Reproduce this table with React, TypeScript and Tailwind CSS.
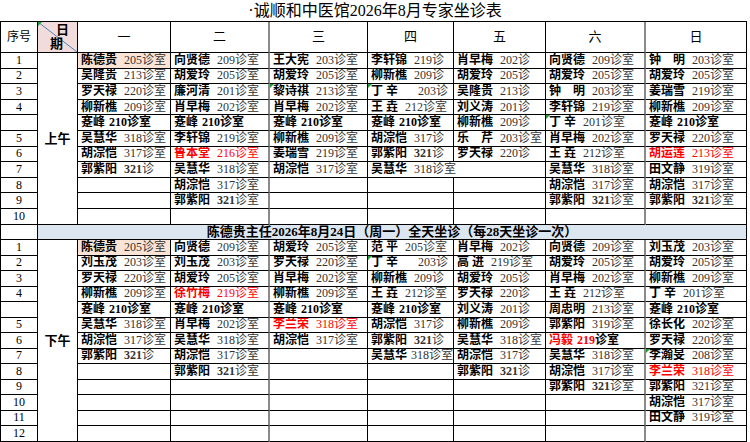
import { Fragment } from 'react'

// flags: r = red, b = bold room number, a = all bold, p = peach bg, w = spills into next column, x = extra gap, n = narrow gap, t = green corner mark
const am: string[][] = [
  ['陈德贵|205诊室|p', '吴隆贵|213诊室', '罗天禄|220诊室', '柳新樵|209诊室', '蹇峰|210诊室|a', '吴慧华|318诊室', '胡淙恺|317诊室', '郭紫阳|321诊|b', '', '', ''],
  ['向贤德|209诊室', '胡爱玲|205诊室', '廉河清|201诊室', '肖早梅|202诊室', '蹇峰|210诊室|a', '李轩锦|219诊室', '鲁本堂|216诊室|r', '吴慧华|318诊室', '胡淙恺|317诊室', '郭紫阳|321诊室|b', ''],
  ['王大宪|203诊室', '胡爱玲|205诊室', '黎诗祺|213诊室|t', '肖早梅|202诊室', '蹇峰|210诊室|a', '柳新樵|209诊室', '姜瑞雪|219诊室', '胡淙恺|317诊室', '', '', ''],
  ['李轩锦|219诊', '柳新樵|209诊', '丁 辛|203诊|xt', '王 垚|212诊室', '蹇峰|210诊室|a', '胡淙恺|317诊', '郭紫阳|321诊|b', '吴慧华|318诊室|w', '', '', ''],
  ['肖早梅|202诊', '胡爱玲|205诊', '吴隆贵|213诊', '刘义涛|201诊', '柳新樵|209诊', '乐　芹|203诊室', '罗天禄|220诊', '-', '', '', ''],
  ['向贤德|209诊室', '胡爱玲|205诊室', '钟　明|203诊室', '李轩锦|219诊室', '丁 辛|201诊室|t', '肖早梅|202诊室', '王 垚|212诊室', '吴慧华|318诊室', '胡淙恺|317诊室', '郭紫阳|321诊室|b', ''],
  ['钟　明|203诊室', '胡爱玲|205诊室', '姜瑞雪|219诊室', '柳新樵|209诊室', '蹇峰|210诊室|a', '罗天禄|220诊室', '胡运莲|213诊室|r', '田文静|319诊室', '胡淙恺|317诊室', '郭紫阳|321诊室|b', ''],
]

const pm: string[][] = [
  ['陈德贵|205诊室|p', '刘玉茂|203诊室', '罗天禄|220诊室', '柳新樵|209诊室', '蹇峰|210诊室|a', '吴慧华|318诊室', '胡淙恺|317诊室', '郭紫阳|321诊|b', '', '', '', '', ''],
  ['向贤德|209诊室', '刘玉茂|203诊室', '胡爱玲|205诊室', '徐竹梅|219诊室|r', '蹇峰|210诊室|a', '肖早梅|202诊室', '吴慧华|318诊室', '胡淙恺|317诊室', '郭紫阳|321诊室|b', '', '', '', ''],
  ['胡爱玲|205诊室', '罗天禄|220诊室', '肖早梅|202诊室', '柳新樵|209诊室', '蹇峰|210诊室|a', '李兰荣|318诊室|r', '胡淙恺|317诊室', '', '', '', '', '', ''],
  ['范 平|205诊室', '丁 辛|203诊|xt', '柳新樵|209诊', '王 垚|212诊室', '蹇峰|210诊室|a', '胡淙恺|317诊', '郭紫阳|321诊|b', '吴慧华|318诊室|n', '', '', '', '', ''],
  ['肖早梅|202诊', '高 进|219诊室', '胡爱玲|205诊', '罗天禄|220诊', '刘义涛|201诊', '柳新樵|209诊', '吴慧华|318诊室', '胡淙恺|317诊', '郭紫阳|321诊|b', '', '', '', ''],
  ['向贤德|209诊室', '胡爱玲|205诊室', '肖早梅|202诊室', '王 垚|212诊室', '周忠明|213诊室', '郭紫阳|319诊室', '冯毅|219诊室|ra', '吴慧华|318诊室', '胡淙恺|317诊室', '郭紫阳|321诊室|b', '', '', ''],
  ['刘玉茂|203诊室', '胡爱玲|205诊室', '柳新樵|209诊室', '丁 辛|201诊室', '蹇峰|210诊室|a', '徐长化|202诊室', '罗天禄|220诊室', '李瀚旻|208诊室|t', '李兰荣|318诊室|r', '郭紫阳|321诊室', '胡淙恺|317诊室', '田文静|319诊室', ''],
]

const amNo = ['1', '2', '3', '4', '', '5', '6', '7', '8', '9', '10']
const pmNo = ['1', '2', '3', '4', '', '5', '6', '7', '8', '9', '10', '11', '12']
const days = ['一', '二', '三', '四', '五', '六', '日']

const cellBase = 'border-r border-b border-black'
// columns 二 and 六 carry the heavier grey rule on their right side
const rightRule = (col: number) => (col === 1 || col === 5 ? 'border-r-2 border-r-[#8a8a8a]' : '')

function Mark() {
  return <span className="absolute left-0 top-0 h-0 w-0 border-t-[4px] border-r-[4px] border-t-[#1f9e3a] border-r-transparent" />
}

function Entry({ s, col }: { s: string; col: number }) {
  const [n, r, f = ''] = s.split('|')
  const red = f.includes('r')
  const all = f.includes('a')
  const [, num, rest] = r.match(/^(\d+)(.*)$/) ?? ['', '', r]
  const color = red ? 'text-[#ff0000]' : 'text-black'
  const roomColor = red ? 'text-[#ff0000]' : 'text-[#333333]'
  const gap = f.includes('x') ? 'ml-[20px]' : f.includes('n') || n.length === 2 ? 'ml-[4px]' : 'ml-[7px]'

  return (
    <div
      className={`${cellBase} ${rightRule(f.includes('w') ? col + 1 : col)} relative flex items-center overflow-hidden whitespace-nowrap pl-[3px] text-[12px] leading-[15px] ${f.includes('w') ? 'col-span-2' : ''} ${f.includes('p') ? 'bg-[#fbe4d5]' : ''}`}
    >
      {f.includes('t') && <Mark />}
      <span className={`font-bold ${color}`}>{n}</span>
      <span className={`${gap} ${roomColor} ${all || f.includes('b') ? 'font-bold' : ''} ${all && !red ? 'text-black' : ''}`}>{num}</span>
      <span className={`${roomColor} ${all ? 'font-bold text-black' : ''} ${red && all ? 'text-[#ff0000]' : ''}`}>{rest}</span>
    </div>
  )
}

function Section({ label, nos, cols }: { label: string; nos: string[]; cols: string[][] }) {
  return (
    <>
      {nos.map((no, i) => (
        <Fragment key={i}>
          <div className={`${cellBase} flex items-center justify-center text-[12px] leading-[15px]`}>{no}</div>
          {i === 0 && (
            <div
              className={`${cellBase} flex items-center justify-center text-[13px] font-bold ${nos.length === 11 ? 'row-span-11' : 'row-span-13'}`}
            >
              {label}
            </div>
          )}
          {cols.map((c, j) => {
            const s = c[i]
            if (s === '-') return null
            if (!s) return <div key={j} className={`${cellBase} ${rightRule(j)}`} />
            return <Entry key={j} s={s} col={j} />
          })}
        </Fragment>
      ))}
    </>
  )
}

export default function App() {
  return (
    <div className="h-[442px] w-[750px] overflow-hidden bg-white text-black font-['Liberation_Serif','Noto_Sans_CJK_SC',serif]">
      <div className="flex h-[21px] items-end justify-center pb-[1px] text-[16px] leading-[19px]">
        ·诚顺和中医馆2026年8月专家坐诊表
      </div>
      <div className="grid w-fit grid-cols-[37px_40px_93px_99px_98px_86px_92px_100px_101px] grid-rows-[31px_repeat(11,15.6px)_15.6px_repeat(13,15.5px)] border-l border-t border-black">
        <div className={`${cellBase} flex items-center justify-center text-[12px]`}>序号</div>
        <div className={`${cellBase} relative flex flex-col justify-between bg-[#f2dcdb] py-[1px] text-[13px] font-bold leading-[14px]`}>
          <svg className="absolute inset-0 h-full w-full" viewBox="0 0 39 30" preserveAspectRatio="none">
            <line x1="0" y1="0" x2="39" y2="30" stroke="#4f81bd" strokeWidth="1" />
          </svg>
          <Mark />
          <span className="relative self-end pr-[8px]">日</span>
          <span className="relative self-start pl-[12px]">期</span>
        </div>
        {days.map((d, j) => (
          <div key={d} className={`${cellBase} ${rightRule(j)} flex items-center justify-center text-[13px]`}>
            {d}
          </div>
        ))}

        <Section label="上午" nos={amNo} cols={am} />

        <div className={cellBase} />
        <div className={`${cellBase} col-span-8 flex items-center justify-center bg-[#dce6f1] text-[13px] font-bold leading-[15px]`}>
          陈德贵主任2026年8月24日（周一）全天坐诊（每28天坐诊一次）
        </div>

        <Section label="下午" nos={pmNo} cols={pm} />
      </div>
    </div>
  )
}
